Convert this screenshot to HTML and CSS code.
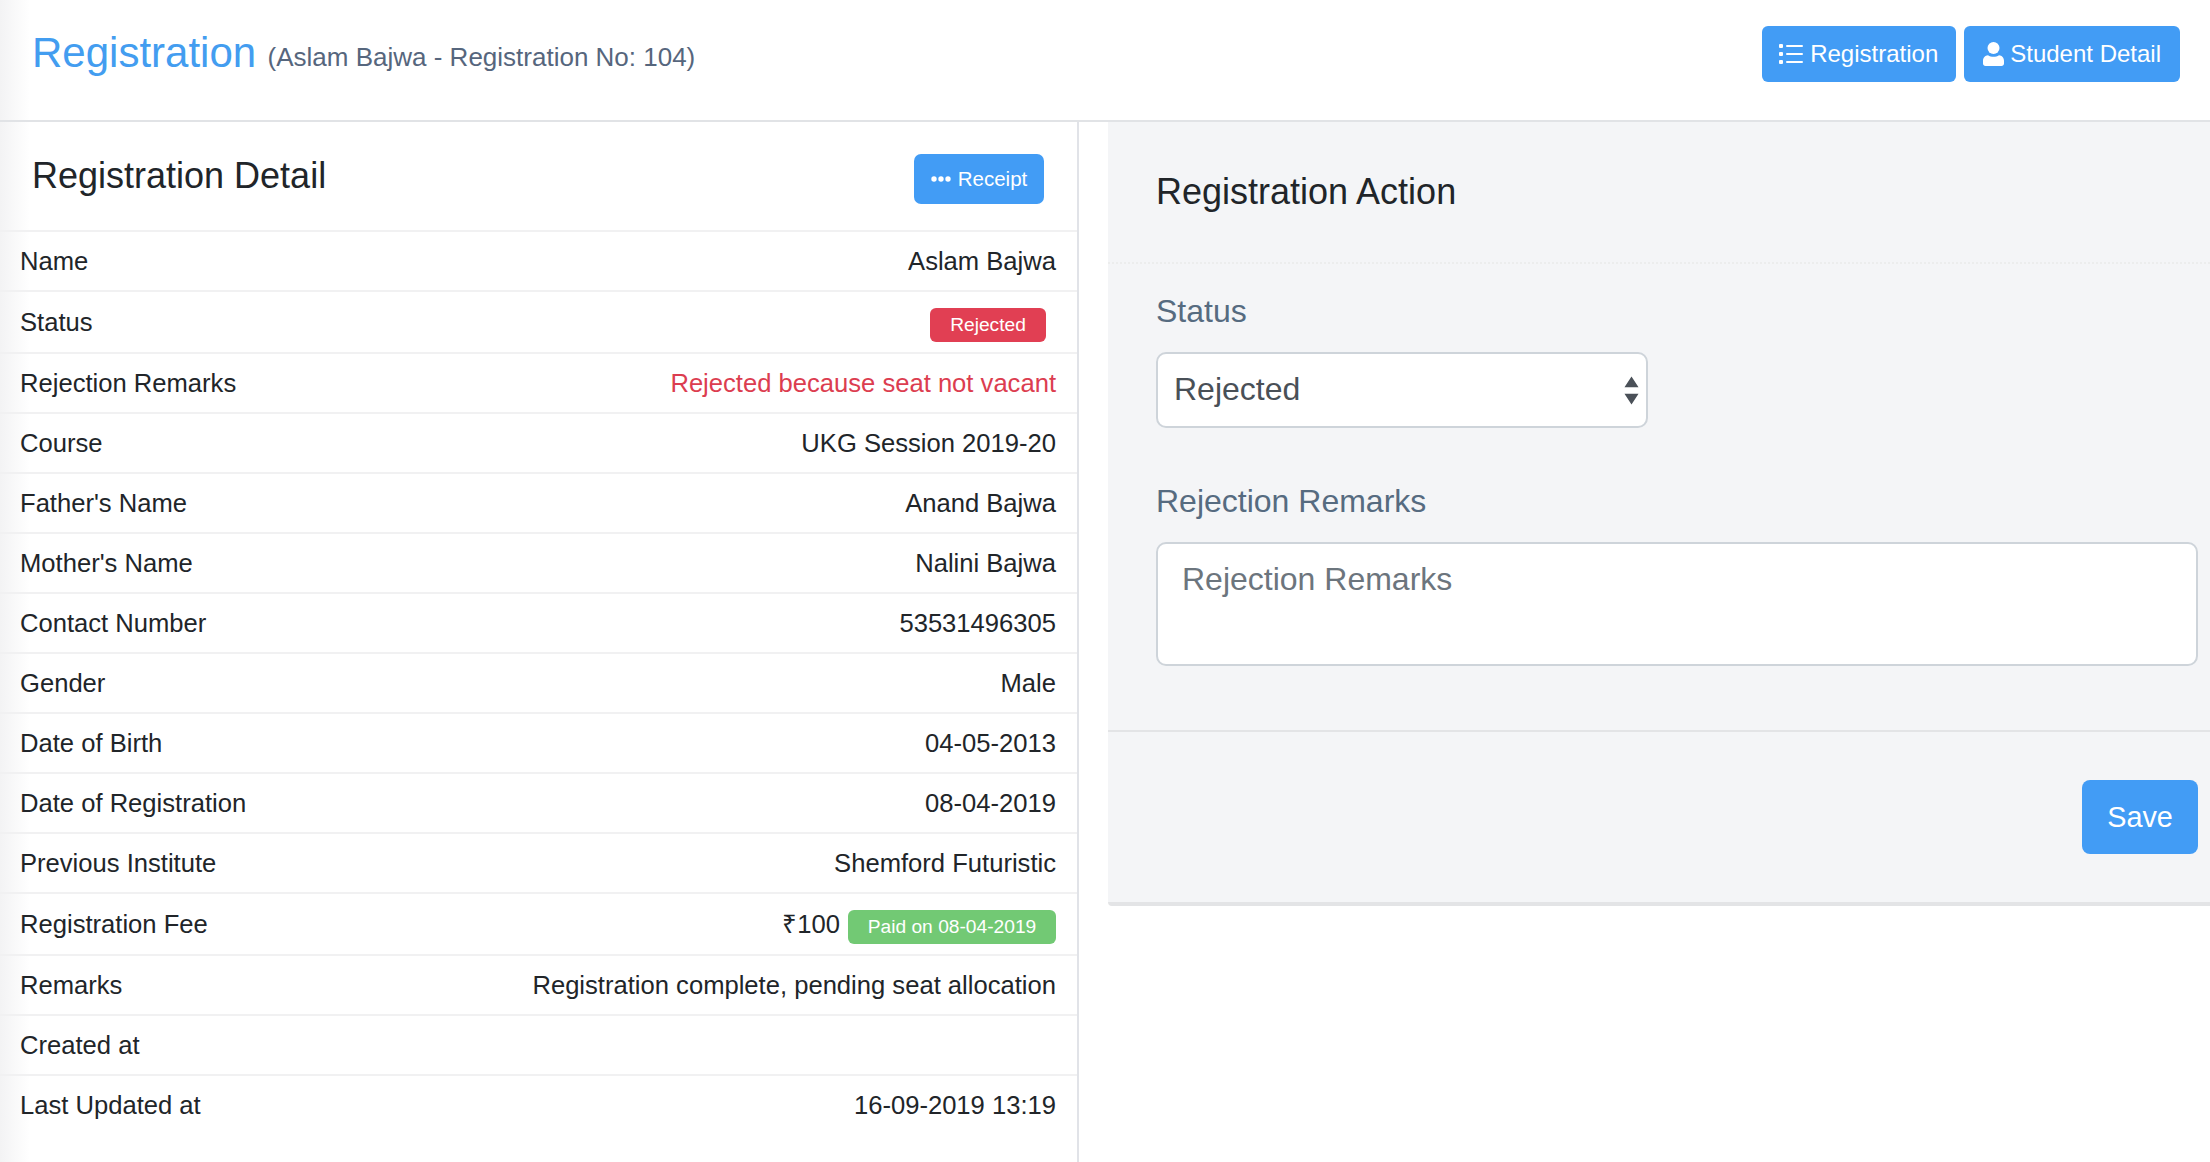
FILE: index.html
```html
<!DOCTYPE html>
<html lang="en">
<head>
<meta charset="utf-8">
<title>Registration</title>
<link rel="stylesheet" href="styles.css">
</head>
<body>
<header class="topbar">
  <div class="heading">
    <h1 class="title">Registration</h1>
    <span class="subtitle">(Aslam Bajwa - Registration No: 104)</span>
  </div>
  <div class="actions">
    <a class="btn btn-top btn-list"><svg viewBox="0 0 24 20" width="24" height="20"><g fill="#fff"><rect x="0" y="0" width="4" height="4" rx="1"/><rect x="0" y="8" width="4" height="4" rx="1"/><rect x="0" y="16" width="4" height="4" rx="1"/><rect x="7" y="1" width="17" height="2" rx="1"/><rect x="7" y="9" width="17" height="2" rx="1"/><rect x="7" y="17" width="17" height="2" rx="1"/></g></svg>Registration</a>
    <a class="btn btn-top btn-student"><svg viewBox="0 0 21 24" width="21" height="24"><g fill="#fff"><circle cx="10.500" cy="6" r="6"/><path d="M5 13.200c1.600 1 3.500 1.500 5.500 1.500s3.900-.5 5.500-1.500c2.900.3 5 2.600 5 5.500v2.800c0 1.400-1.100 2.500-2.500 2.500h-16C1.100 24 0 22.900 0 21.500v-2.800c0-2.900 2.100-5.200 5-5.500z"/></g></svg>Student Detail</a>
  </div>
</header>
<main class="layout">
  <section class="detail">
    <div class="detail-head">
      <h2 class="detail-title">Registration Detail</h2>
      <a class="btn btn-receipt"><svg viewBox="0 0 20 6" width="20" height="6"><g fill="#fff"><circle cx="3" cy="3" r="2.700"/><circle cx="10" cy="3" r="2.700"/><circle cx="17" cy="3" r="2.700"/></g></svg>Receipt</a>
    </div>
    <div class="row"><span>Name</span><span>Aslam Bajwa</span></div>
    <div class="row row-badge"><span>Status</span><span class="badge badge-red">Rejected</span></div>
    <div class="row"><span>Rejection Remarks</span><span class="danger">Rejected because seat not vacant</span></div>
    <div class="row"><span>Course</span><span>UKG Session 2019-20</span></div>
    <div class="row"><span>Father's Name</span><span>Anand Bajwa</span></div>
    <div class="row"><span>Mother's Name</span><span>Nalini Bajwa</span></div>
    <div class="row"><span>Contact Number</span><span>53531496305</span></div>
    <div class="row"><span>Gender</span><span>Male</span></div>
    <div class="row"><span>Date of Birth</span><span>04-05-2013</span></div>
    <div class="row"><span>Date of Registration</span><span>08-04-2019</span></div>
    <div class="row"><span>Previous Institute</span><span>Shemford Futuristic</span></div>
    <div class="row row-fee"><span>Registration Fee</span><span class="fee"><span class="amount">₹100</span><span class="badge badge-green">Paid on 08-04-2019</span></span></div>
    <div class="row"><span>Remarks</span><span>Registration complete, pending seat allocation</span></div>
    <div class="row"><span>Created at</span><span></span></div>
    <div class="row"><span>Last Updated at</span><span>16-09-2019 13:19</span></div>
  </section>
  <section class="action-col">
    <div class="card">
      <h2 class="card-title">Registration Action</h2>
      <div class="card-body">
        <label class="label" for="status">Status</label>
        <div class="select-wrap">
          <select class="control select" id="status"><option>Rejected</option></select>
          <svg class="carets" viewBox="0 0 16 30" width="15" height="29"><path fill="#4a5058" d="M8 0l7.500 11.500H.5zM8 30L.5 18.500h15z"/></svg>
        </div>
        <label class="label label-2" for="remarks">Rejection Remarks</label>
        <textarea class="control area" id="remarks" placeholder="Rejection Remarks"></textarea>
      </div>
      <div class="card-foot"><button class="btn btn-save">Save</button></div>
    </div>
  </section>
</main>
</body>
</html>
```
FILE: styles.css
```css
* { box-sizing: border-box; }
html, body { margin: 0; height: 100%; }
body {
  font-family: "Liberation Sans", Arial, sans-serif;
  color: #212529;
  background: #fff;
  height: 1162px;
  overflow: hidden;
  background-image: linear-gradient(to right, #f3f3f4 0, #fff 30px);
}
.topbar {
  height: 122px;
  border-bottom: 2px solid #e1e3e6;
  display: flex;
  align-items: center;
  justify-content: space-between;
  padding: 0 30px 6px 32px;
}
.heading { margin-top: -8px; }
.title { display: inline; margin: 0; font-size: 42px; font-weight: 400; color: #439df0; line-height: 1.2; }
.subtitle { margin-left: 7px; font-size: 26px; color: #56667d; vertical-align: 1px; }
.actions { display: flex; gap: 8px; margin-top: -6px; }
.btn {
  display: inline-flex;
  align-items: center;
  justify-content: center;
  background: #429cf5;
  color: #fff;
  border: 0;
  border-radius: 6px;
  font-family: inherit;
}
.btn-top { height: 56px; font-size: 24px; }
.btn-list { padding: 0 18px 0 17px; gap: 7px; }
.btn-student { padding: 0 19px; gap: 6px; }
.layout { display: flex; height: 1040px; }
.detail {
  width: 1079px;
  border-right: 2px solid #e1e3e8;
  flex: none;
}
.detail-head {
  height: 108px;
  display: flex;
  align-items: center;
  justify-content: space-between;
  padding: 6px 33px 0 32px;
}
.detail-title { margin: 0 0 6px; font-size: 36px; font-weight: 400; line-height: 1.2; color: #212529; }
.btn-receipt { height: 50px; width: 130px; font-size: 20.500px; gap: 7px; border-radius: 7px; }
.row {
  height: 60px;
  border-top: 2px solid #f1f1f2;
  padding: 0 21px 0 20px;
  display: flex;
  align-items: center;
  justify-content: space-between;
  font-size: 25.600px;
}
.row-badge, .row-fee { height: 62px; }
.danger { color: #dc3d50; }
.badge {
  display: inline-flex;
  align-items: center;
  justify-content: center;
  height: 34px;
  margin-top: 6px;
  color: #fff;
  font-size: 19.200px;
  border-radius: 6px;
}
.badge-red { background: #e13f53; margin-right: 10px; width: 116px; }
.badge-green { background: #72c974; width: 208px; }
.fee { display: flex; align-items: center; gap: 8px; }
.amount { margin-bottom: 2px; }
.action-col { flex: 1; padding-left: 29px; min-width: 0; }
.card {
  background: #f4f5f7;
  border-bottom: 4px solid #e3e4e6;
  border-bottom-left-radius: 4px;
  height: 784px;
}
.card-title {
  margin: 0;
  height: 142px;
  padding: 48px 0 0 48px;
  font-size: 36px;
  font-weight: 400;
  line-height: 1.2;
  color: #212529;
  border-bottom: 2px dotted #eceded;
}
.card-body {
  height: 468px;
  padding: 28px 12px 0 48px;
  border-bottom: 2px solid #e3e4e6;
}
.label { display: block; font-size: 32px; color: #566b80; line-height: 1.2; }
.label-2 { margin-top: 54px; }
.select-wrap { position: relative; width: 492px; margin-top: 22px; }
.control {
  display: block;
  width: 100%;
  font-family: inherit;
  font-size: 32px;
  color: #495057;
  background: #fff;
  border: 2px solid #ced4da;
  border-radius: 10px;
  outline: 0;
}
.select {
  height: 76px;
  padding: 0 16px 2px;
  appearance: none;
  -webkit-appearance: none;
}
.carets { position: absolute; right: 9px; top: 24px; }
.area {
  height: 124px;
  margin-top: 21px;
  padding: 17px 24px;
  resize: none;
}
.area::placeholder { color: #6c757d; opacity: 1; }
.card-foot { display: flex; justify-content: flex-end; padding: 48px 12px 0 0; }
.btn-save { width: 116px; height: 74px; font-size: 28.800px; font-weight: 400; border-radius: 8px; }
```
